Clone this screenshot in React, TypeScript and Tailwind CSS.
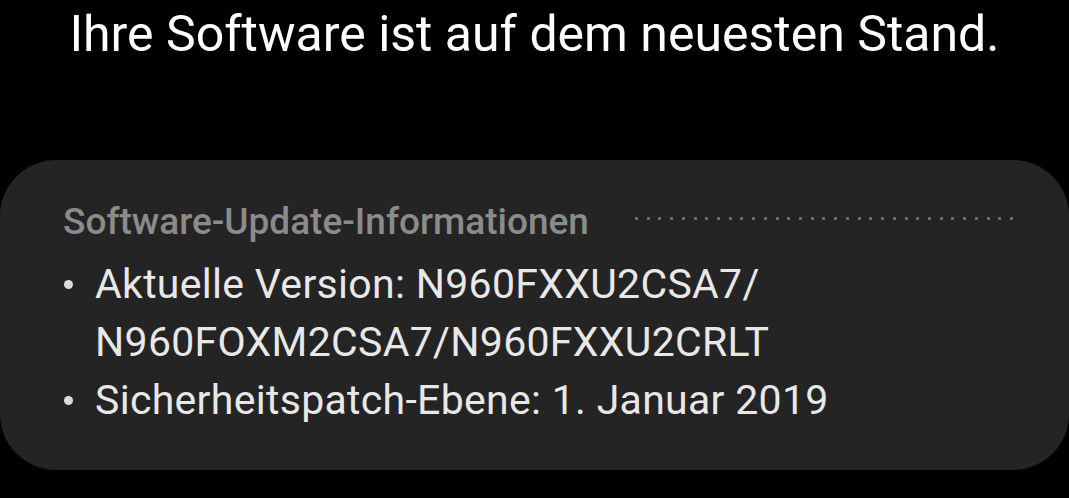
import React from "react";

const dots = Array.from({ length: 33 }, (_, i) => i);

export default function App() {
  return (
    <div
      className="w-[1069px] h-[498px] bg-black overflow-hidden flex flex-col"
      style={{ fontFamily: "Roboto, 'Noto Sans', sans-serif" }}
    >
      <div className="h-[160px] pt-[9px] flex justify-center">
        <div className="text-[50px] leading-none text-white whitespace-nowrap">
          Ihre Software ist auf dem neuesten Stand.
        </div>
      </div>
      <div className="h-[310px] bg-[#242424] rounded-[56px] pt-[43px]">
        <div className="flex items-center pl-[63px] pr-[56px]">
          <div className="text-[37px] font-medium leading-none text-[#8b8b8b] whitespace-nowrap">
            Software-Update-Informationen
          </div>
          <div className="flex-1 ml-[46px] flex justify-between items-center mt-[-7px]">
            {dots.map((i) => (
              <span key={i} className="w-[3px] h-[3px] bg-[#6c6c6c]" />
            ))}
          </div>
        </div>
        <div className="mt-[15px] text-[41px] tracking-[0.3px] leading-[58px] text-[#e8e8e8]">
          <div className="flex">
            <div className="w-[95px] flex justify-center pl-[42px] pt-[25px] shrink-0">
              <span className="w-[9px] h-[9px] rounded-full bg-[#dcdcdc] block" />
            </div>
            <div>
              <div>Aktuelle Version: N960FXXU2CSA7/</div>
              <div>N960FOXM2CSA7/N960FXXU2CRLT</div>
            </div>
          </div>
          <div className="flex">
            <div className="w-[95px] flex justify-center pl-[42px] pt-[25px] shrink-0">
              <span className="w-[9px] h-[9px] rounded-full bg-[#dcdcdc] block" />
            </div>
            <div>Sicherheitspatch-Ebene: 1. Januar 2019</div>
          </div>
        </div>
      </div>
    </div>
  );
}
